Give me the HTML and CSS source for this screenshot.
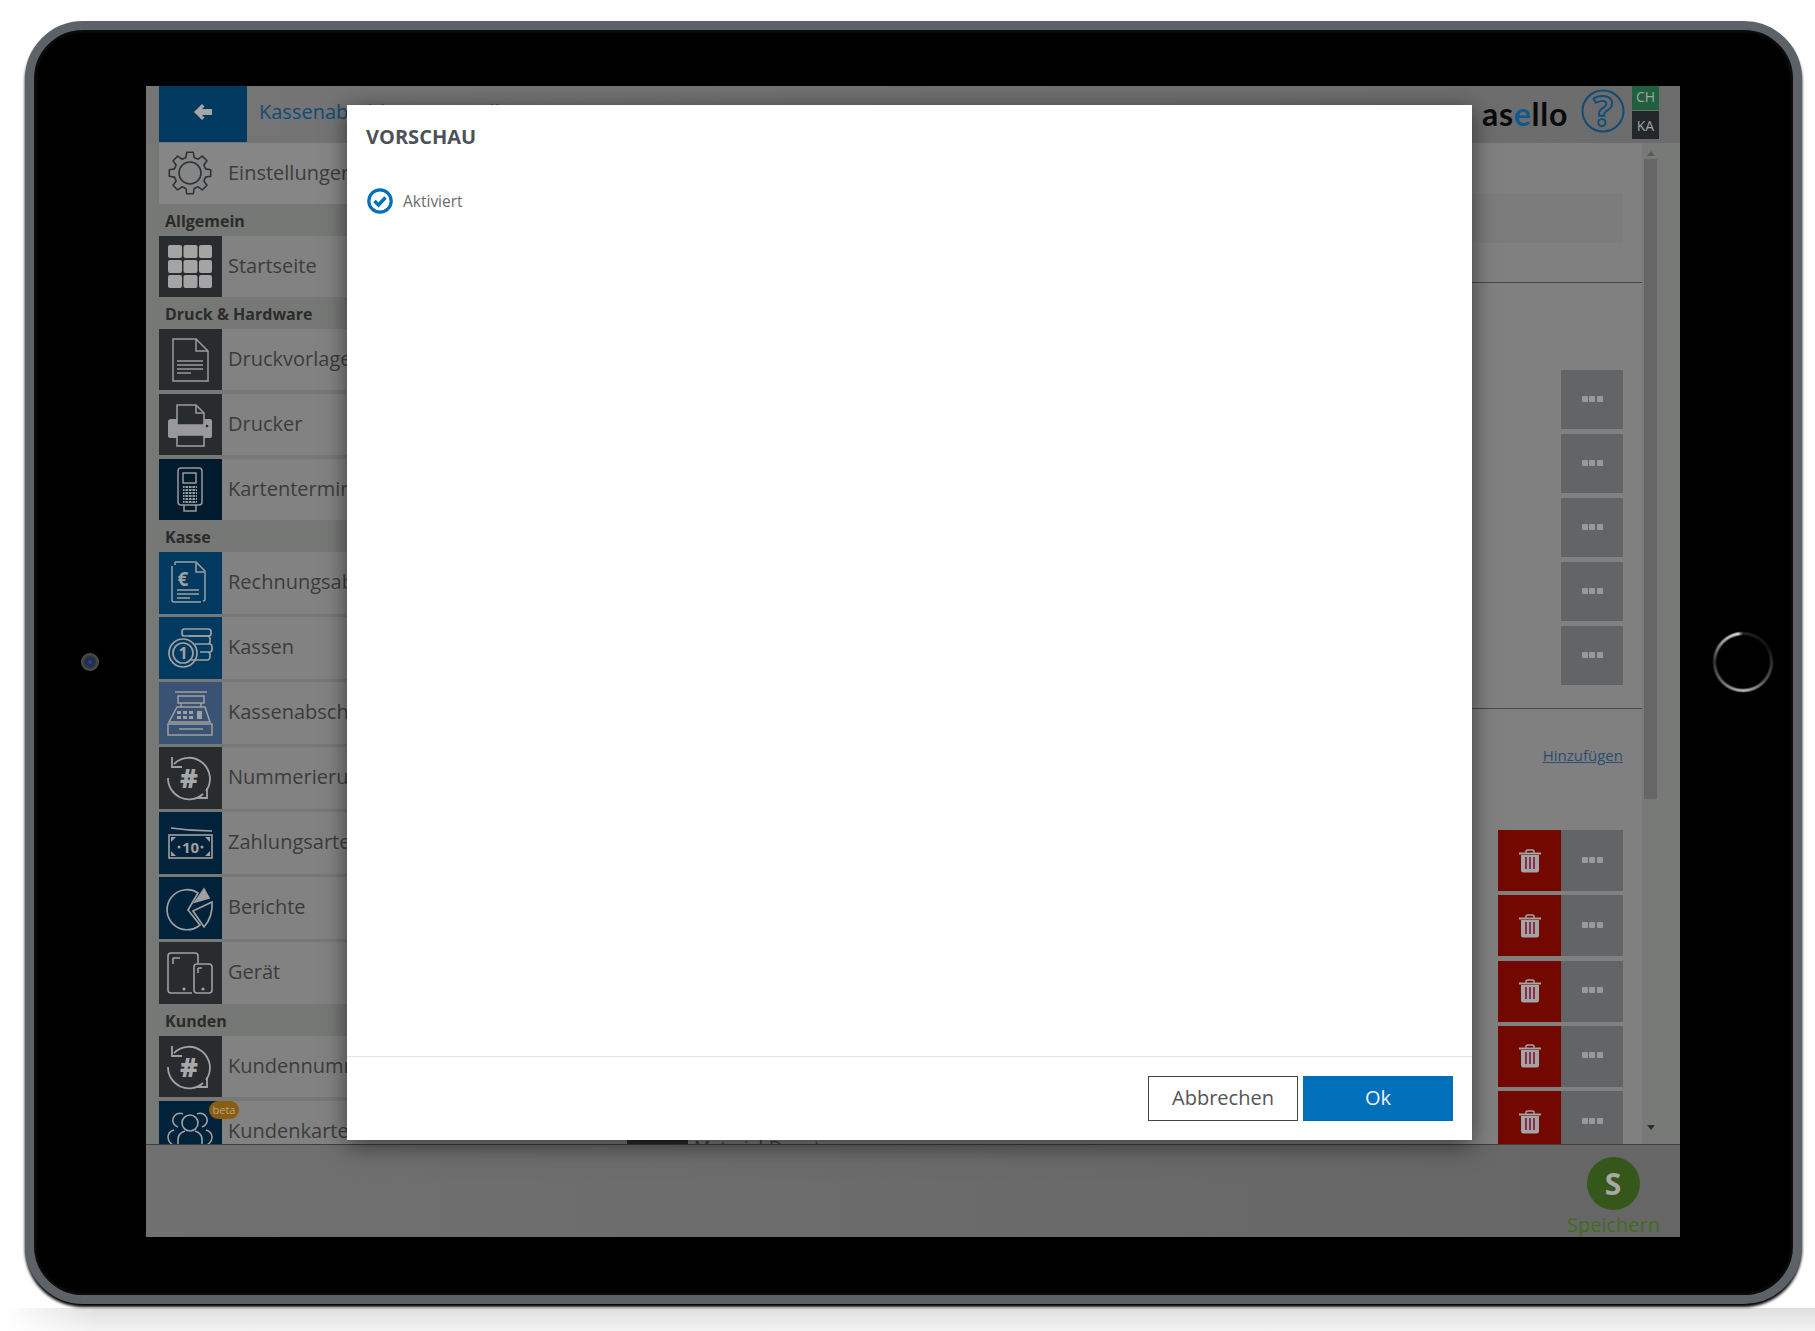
FILE: index.html
```html
<!DOCTYPE html>
<html lang="de">
<head>
  <meta charset="UTF-8">
  <title>asello - Kassenabschluss Einstellungen</title>
  <link rel="stylesheet" href="styles.css">
</head>
<body>

  <div class="tablet">
    <div class="camera"></div>
    <div class="home-btn"></div>

    <div class="screen">
      <div class="topbar">
        <a class="back" href="#">
          <svg width="18" height="16" viewBox="0 0 18 16"><path d="M8 0 0 8l8 8 2.500-2.500L8 11h10V5H8l2.500-2.500z" fill="#a6a6a6"/></svg>
        </a>
        <div class="page-title">Kassenabschluss - Einstellungen</div>
        <div class="logo">as<span>e</span>llo</div>
        <svg class="help" width="44" height="44" viewBox="0 0 44 44">
          <circle cx="22" cy="22" r="20.500" fill="none" stroke="#0e4c7a" stroke-width="2"/>
          <text x="22" y="37" text-anchor="middle" class="help-mark">?</text>
        </svg>
        <div class="badges">
          <div class="badge green">CH</div>
          <div class="badge dark">KA</div>
        </div>
      </div>

      <div class="main">
        <div class="sidebar">
          <div class="row settings">
            <div class="ico">
              <svg viewBox="0 0 63 61"><g transform="translate(31 30)" fill="none" stroke="#2f3336" stroke-width="1.600" stroke-linejoin="round"><path d="M-4.100-15.500-3.300-20.700 3.300-20.700 4.100-15.500 8.060-13.860 12.300-16.970 16.970-12.300 13.860-8.060 15.500-4.100 20.700-3.300 20.700 3.300 15.500 4.100 13.860 8.060 16.970 12.300 12.300 16.970 8.060 13.860 4.100 15.500 3.300 20.700-3.300 20.700-4.100 15.500-8.060 13.860-12.300 16.970-16.970 12.300-13.860 8.060-15.500 4.100-20.700 3.300-20.700-3.300-15.500-4.100-13.860-8.060-16.970-12.300-12.300-16.970-8.060-13.860z"/><circle r="11"/></g></svg>
            </div>
            <span>Einstellungen</span>
          </div>

          <div class="group">Allgemein</div>
          <div class="section">
            <div class="row">
              <div class="ico dark">
                <svg viewBox="0 0 63 61" fill="#a4a4a4"><rect x="9" y="9" width="14" height="13" rx="2"/><rect x="24.500" y="9" width="14" height="13" rx="2"/><rect x="40" y="9" width="13" height="13" rx="2"/><rect x="9" y="24" width="14" height="13" rx="2"/><rect x="24.500" y="24" width="14" height="13" rx="2"/><rect x="40" y="24" width="13" height="13" rx="2"/><rect x="9" y="39" width="14" height="13" rx="2"/><rect x="24.500" y="39" width="14" height="13" rx="2"/><rect x="40" y="39" width="13" height="13" rx="2"/></svg>
              </div>
              <span>Startseite</span>
            </div>
          </div>

          <div class="group">Druck &amp; Hardware</div>
          <div class="section">
            <div class="row">
              <div class="ico dark">
                <svg viewBox="0 0 63 61" fill="none" stroke="#999" stroke-width="1.500"><path d="M14 10h23l12 12v30H14zM37 10v12h12"/><path d="M18 32h26M18 36h26M18 40h26M18 44h14" stroke-width="1.700"/></svg>
              </div>
              <span>Druckvorlagen</span>
            </div>
            <div class="row">
              <div class="ico dark">
                <svg viewBox="0 0 63 61"><path d="M12 25h39q2 0 2 2v15q0 2-2 2H12q-3 0-3-2V28q0-3 3-3z" fill="#999"/><path d="M18 31V11h19l8 8v12z" fill="#282c2f" stroke="#999" stroke-width="1.600"/><path d="M37 11v8h8" fill="none" stroke="#999" stroke-width="1.600"/><rect x="18" y="41" width="27" height="11" fill="#282c2f" stroke="#999" stroke-width="1.600"/><circle cx="48" cy="32" r="1.300" fill="#282c2f"/></svg>
              </div>
              <span>Drucker</span>
            </div>
            <div class="row">
              <div class="ico midnight">
                <svg viewBox="0 0 63 61" fill="none" stroke="#999" stroke-width="1.500"><rect x="19" y="9" width="24" height="37" rx="3"/><rect x="24" y="14" width="13" height="10"/><path d="M25 46v6h12v-6"/><path d="M24 28h14M24 31h14M24 34h14M24 37h14M24 40h14M24 43h14" stroke-width="1.800"/><path d="M26 27v17M29.500 27v17M33 27v17M36.500 27v17" stroke="#001a2e" stroke-width=".8"/></svg>
              </div>
              <span>Kartenterminal</span>
            </div>
          </div>

          <div class="group">Kasse</div>
          <div class="section kasse">
            <div class="row">
              <div class="ico navy">
                <svg viewBox="0 0 63 61" fill="none" stroke="#a0a0a0" stroke-width="1.500"><path d="M16 10h21l9 9v28q0 2-2 2M13 14v34q0 2 2 2h27"/><path d="M16 10v3"/><text x="24" y="34" class="ico-euro">€</text><path d="M37 11v9h8M18 38h22M18 42h22M18 46h13"/></svg>
              </div>
              <span>Rechnungsabschluss</span>
            </div>
            <div class="row">
              <div class="ico navy">
                <svg viewBox="0 0 63 61" fill="none" stroke="#a0a0a0" stroke-width="1.700"><rect x="23" y="12" width="29" height="7" rx="2.500"/><path d="M30 19h19q2 .5 2 3v2q0 3-2 3H36M40 27h11q2 .5 2 3v2q0 3-2 3H41M41 35h8q2 .5 2 3v2q0 2-2 3H32"/><circle cx="24" cy="36" r="14"/><circle cx="24" cy="36" r="10"/><text x="24" y="42" text-anchor="middle" class="ico-one">1</text></svg>
              </div>
              <span>Kassen</span>
            </div>
            <div class="row">
              <div class="ico slate">
                <svg viewBox="0 0 63 61" fill="none" stroke="#a0a0a0" stroke-width="1.500"><path d="M16 10h32M19 14h26v7H19zM22 21v4M42 21v4"/><path d="M18 25h28l5 15H10z"/><rect x="9" y="42" width="44" height="11"/><path d="M20 47h24"/><g fill="#a0a0a0" stroke="none"><rect x="18" y="29" width="4" height="3"/><rect x="24" y="29" width="4" height="3"/><rect x="30" y="29" width="4" height="3"/><rect x="18" y="34" width="4" height="3"/><rect x="24" y="34" width="4" height="3"/><rect x="30" y="34" width="4" height="3"/><rect x="38" y="29" width="5" height="8"/></g></svg>
              </div>
              <span>Kassenabschluss</span>
            </div>
            <div class="row">
              <div class="ico dark">
                <svg viewBox="0 0 63 61" fill="none" stroke="#a0a0a0" stroke-width="1.800"><path d="M15 17A21 21 0 0 1 47 44"/><path d="M13 10v10h10"/><path d="M9 31A21 21 0 0 0 44 47"/><path d="M48 41v10H38"/><text x="30" y="41" text-anchor="middle" class="ico-hash">#</text></svg>
              </div>
              <span>Nummerierung</span>
            </div>
            <div class="row">
              <div class="ico midnight2">
                <svg viewBox="0 0 63 61" fill="none" stroke="#a0a0a0" stroke-width="1.600"><path d="M12 16q20 3 41 3"/><rect x="10" y="23" width="43" height="23"/><text x="31.500" y="41" text-anchor="middle" class="ico-ten">10</text><g fill="#a0a0a0" stroke="none"><circle cx="20" cy="35" r="1.500"/><circle cx="43" cy="35" r="1.500"/><path d="M12 25h5l-5 5zM51 25h-5l5 5zM12 44h5l-5-5zM51 44h-5l5-5z"/></g></svg>
              </div>
              <span>Zahlungsarten</span>
            </div>
            <div class="row">
              <div class="ico midnight2">
                <svg viewBox="0 0 63 61" fill="none" stroke="#a0a0a0" stroke-width="1.700"><path d="M39 16a20 20 0 1 0 2 32L29 33z"/><path d="M36 25l9-13 5 9z" fill="#a0a0a0"/><path d="M34 34l19-9q1 15-8 25z"/></svg>
              </div>
              <span>Berichte</span>
            </div>
            <div class="row">
              <div class="ico dark">
                <svg viewBox="0 0 63 61" fill="none" stroke="#a0a0a0" stroke-width="1.600"><path d="M33 51H12q-3 0-3-3V14q0-3 3-3h24q3 0 3 3v7"/><path d="M14 16v6M14 16h7"/><rect x="35" y="22" width="18" height="29" rx="3"/><path d="M39 26h4M39 26v5"/><circle cx="44" cy="47" r=".8"/><circle cx="25" cy="47" r=".8"/></svg>
              </div>
              <span>Gerät</span>
            </div>
          </div>

          <div class="group">Kunden</div>
          <div class="section">
            <div class="row">
              <div class="ico dark">
                <svg viewBox="0 0 63 61" fill="none" stroke="#a0a0a0" stroke-width="1.800"><path d="M15 17A21 21 0 0 1 47 44"/><path d="M13 10v10h10"/><path d="M9 31A21 21 0 0 0 44 47"/><path d="M48 41v10H38"/><text x="30" y="41" text-anchor="middle" class="ico-hash">#</text></svg>
              </div>
              <span>Kundennummer</span>
            </div>
            <div class="row">
              <div class="ico midnight2">
                <svg viewBox="0 0 63 61" fill="none" stroke="#a0a0a0" stroke-width="1.600"><circle cx="31" cy="22" r="8"/><path d="M24 13a7 7 0 1 0-5 13M38 13a7 7 0 1 1 5 13"/><path d="M19 44v-5q0-7 7-9M43 44v-5q0-7-7-9M14 44q-5-3-5-8 0-5 6-7M48 44q5-3 5-8 0-5-6-7"/></svg>
              </div>
              <span>Kundenkarten</span>
              <div class="beta">beta</div>
            </div>
          </div>
        </div>

        <div class="content">
          <div class="input-bar"></div>
          <div class="sep first"></div>

          <div class="list plain">
            <div class="item"><div class="more"><i></i><i></i><i></i></div></div>
            <div class="item"><div class="more"><i></i><i></i><i></i></div></div>
            <div class="item"><div class="more"><i></i><i></i><i></i></div></div>
            <div class="item"><div class="more"><i></i><i></i><i></i></div></div>
            <div class="item"><div class="more"><i></i><i></i><i></i></div></div>
          </div>
          <div class="sep second"></div>

          <div class="add-line"><a href="#">Hinzufügen</a></div>

          <div class="list">
            <div class="item"><div class="del"><svg width="22" height="24" viewBox="0 0 22 24"><use href="#trash"/></svg></div><div class="more"><i></i><i></i><i></i></div></div>
            <div class="item"><div class="del"><svg width="22" height="24" viewBox="0 0 22 24"><use href="#trash"/></svg></div><div class="more"><i></i><i></i><i></i></div></div>
            <div class="item"><div class="del"><svg width="22" height="24" viewBox="0 0 22 24"><use href="#trash"/></svg></div><div class="more"><i></i><i></i><i></i></div></div>
            <div class="item"><div class="del"><svg width="22" height="24" viewBox="0 0 22 24"><use href="#trash"/></svg></div><div class="more"><i></i><i></i><i></i></div></div>
            <div class="item">
              <div class="peek"><div class="thumb"></div><span>Material-Depot</span></div>
              <div class="del"><svg width="22" height="24" viewBox="0 0 22 24"><use href="#trash"/></svg></div><div class="more"><i></i><i></i><i></i></div>
            </div>
          </div>
        </div>

        <div class="scrollbar">
          <div class="arrow up"></div>
          <div class="thumb-bar"></div>
          <div class="arrow down"></div>
        </div>
      </div>

      <div class="bottombar">
        <a class="save" href="#">
          <div class="save-circle">S</div>
          <div class="save-label">Speichern</div>
        </a>
      </div>

      <!-- Vorschau dialog -->
      <div class="modal">
        <div class="modal-body">
          <h3>VORSCHAU</h3>
          <div class="check-line">
            <svg width="26" height="26" viewBox="0 0 26 26" fill="none" stroke="#0070ba"><circle cx="13" cy="13" r="11.200" stroke-width="3.200"/><path d="M7.500 13l4 4 7-7.500" stroke-width="3.400"/></svg>
            <span>Aktiviert</span>
          </div>
        </div>
        <div class="modal-foot">
          <button class="btn cancel">Abbrechen</button>
          <button class="btn ok">Ok</button>
        </div>
      </div>
    </div>
  </div>
  <div class="floor"></div>

  <svg width="0" height="0" class="defs">
    <symbol id="trash" viewBox="0 0 22 24">
      <path d="M7 4V2.500Q7 1 9 1h4q2 0 2 1.500V4" fill="none" stroke="#a4a4a4" stroke-width="1.500"/>
      <rect x="0" y="3.500" width="22" height="2" fill="#a4a4a4"/>
      <path d="M2 6h18v15q0 2.500-2.500 2.500h-13Q2 23.500 2 21z" fill="#a4a4a4"/>
      <path d="M7 8v12M11 8v12M15 8v12" stroke="#7c0a30" stroke-width="1.500"/>
    </symbol>
  </svg>

</body>
</html>
```

FILE: styles.css
```css
* {
  box-sizing: border-box;
}

html, body {
  margin: 0;
  height: 1331px;
  overflow: hidden;
}

body {
  background: #fff;
  font-family: "Open Sans", Arial, sans-serif;
  padding: 21px 13px 0 25px;
}

a {
  color: inherit;
}

.defs {
  position: absolute;
}

/* device frame */
.tablet {
  position: relative;
  height: 1283px;
  padding: 56px 0 0 112px;
  background: #000;
  border: 9px solid #5c6268;
  border-radius: 58px;
  box-shadow: inset 0 0 3px 2px #111, 0 3px 3px #000;
}

.floor {
  height: 27px;
  margin: 4px -13px 0 -20px;
  background: linear-gradient(90deg, #fff, rgba(255, 255, 255, 0) 90px), linear-gradient(#dfdfdf, #f6f6f6);
}

.camera {
  position: absolute;
  left: 47px;
  top: 623px;
  width: 18px;
  height: 18px;
  border-radius: 50%;
  background: radial-gradient(circle, #2a4fa0 0, #142a60 25%, #333 42%, #555 72%, #222 100%);
}

.home-btn {
  position: absolute;
  left: 1678px;
  top: 601px;
  width: 62px;
  height: 62px;
  border-radius: 50%;
  background: conic-gradient(#222 0deg, #111 60deg, #555 130deg, #bbb 180deg, #666 230deg, #333 270deg, #aaa 320deg, #ddd 350deg, #222 360deg);
  -webkit-mask: radial-gradient(circle, transparent 26px, #000 28px, #000 29px, transparent 31px);
  mask: radial-gradient(circle, transparent 26px, #000 28px, #000 29px, transparent 31px);
}

.screen {
  position: relative;
  width: 1534px;
  height: 1151px;
  display: flex;
  flex-direction: column;
  background: #757875;
  overflow: hidden;
}

/* top bar */
.topbar {
  height: 57px;
  flex: none;
  display: flex;
  align-items: flex-start;
  padding-left: 13px;
  background: linear-gradient(90deg, #757575, #6c6c6c);
}

.back {
  width: 88px;
  height: 56px;
  padding-bottom: 4px;
  display: flex;
  align-items: center;
  justify-content: center;
  background: #003a60;
}

.page-title {
  margin: 12px 0 0 12px;
  font-size: 20px;
  color: #0e4c7a;
  flex: 1;
}

.logo {
  margin: 6px 0 0;
  font-family: Lato, "Open Sans", sans-serif;
  font-weight: 700;
  font-size: 32px;
  letter-spacing: 0.7px;
  color: #0a0a0a;
  line-height: 44px;
}

.logo span {
  color: #0e5a8c;
}

.help {
  margin: 3px 7px 0 13px;
  overflow: visible;
}

.help-mark {
  font-size: 41px;
  font-weight: 700;
  fill: none;
  stroke: #0e4c7a;
  stroke-width: 1.800;
}

.badges {
  width: 27px;
  margin-right: 21px;
}

.badge {
  height: 24px;
  text-align: center;
  font-size: 14px;
  line-height: 22px;
  color: #a0a5a2;
}

.badge.green {
  background: #206040;
  margin-bottom: 1px;
}

.badge.dark {
  height: 28px;
  line-height: 30px;
  background: #22272a;
}

/* main area */
.main {
  flex: none;
  height: 1001px;
  display: flex;
}

.sidebar {
  width: 253px;
  flex: none;
  padding-left: 13px;
  overflow: hidden;
}

.section {
  display: flex;
  flex-direction: column;
  gap: 4px;
}

.section.kasse {
  gap: 3px;
}

.row {
  position: relative;
  height: 61px;
  flex: none;
  display: flex;
  align-items: center;
  background: #828282;
  font-size: 20px;
  color: #3c3c3c;
  white-space: nowrap;
}

.kasse .row {
  height: 62px;
}

.row span {
  margin: 0 0 2px 6px;
}

.kasse .row span {
  margin-bottom: 3px;
}

.row.settings {
  background: #868686;
}

.ico {
  width: 63px;
  height: 100%;
  flex: none;
}

.ico svg {
  display: block;
  width: 63px;
  height: 61px;
}

.ico.dark { background: #282c2f; }
.ico.navy { background: #003a60; }
.ico.slate { background: #3a5273; }
.ico.midnight { background: #001a2e; }
.ico.midnight2 { background: #00233b; }

.ico-euro { font-size: 19px; font-weight: 700; fill: #a0a0a0; stroke: none; text-anchor: middle; }
.ico-one { font-size: 16px; font-weight: 700; fill: #a0a0a0; stroke: none; }
.ico-hash { font-size: 27px; font-weight: 800; fill: #a8a8a8; stroke: none; }
.ico-ten { font-size: 15px; font-weight: 700; fill: #a0a0a0; stroke: none; }

.group {
  height: 32px;
  padding: 5px 0 0 6px;
  font-size: 16px;
  line-height: 24px;
  font-weight: 700;
  color: #2b2b2b;
  white-space: nowrap;
}

.beta {
  position: absolute;
  left: 50px;
  top: 0;
  width: 30px;
  height: 18px;
  border-radius: 9px;
  background: #8a5c10;
  text-align: center;
  font-size: 11px;
  line-height: 17px;
  color: #b5a488;
}

/* content behind the dialog */
.content {
  flex: 1;
  min-width: 0;
  padding: 51px 19px 0 0;
  background: #808080;
  overflow: hidden;
}

.input-bar {
  height: 49px;
  background: #7c7c7c;
}

.sep {
  height: 1px;
  margin-right: -19px;
  background: #44484c;
}

.sep.first {
  margin-top: 39px;
  margin-bottom: 87px;
}

.sep.second {
  margin-top: 23px;
}

.list {
  display: flex;
  flex-direction: column;
  gap: 4.250px;
}

.list.plain {
  gap: 5px;
}

.item {
  height: 61px;
  display: flex;
  justify-content: flex-end;
}

.plain .item {
  height: 59px;
}

.del {
  width: 63px;
  display: flex;
  align-items: center;
  justify-content: center;
  background: #720800;
}

.more {
  width: 62px;
  display: flex;
  align-items: center;
  justify-content: center;
  gap: 1.500px;
  padding-bottom: 2px;
  background: #636465;
}

.more i {
  width: 6px;
  height: 6px;
  border-radius: 1px;
  background: #999;
}

.add-line {
  height: 121px;
  padding-top: 35px;
  text-align: right;
  font-size: 15px;
  line-height: 22px;
  color: #2b4d70;
}

.peek {
  flex: none;
  display: flex;
  align-items: flex-start;
  gap: 6px;
  height: 70px;
  margin: 0 auto 0 228px;
  padding-top: 49px;
  font-size: 18px;
  line-height: 20px;
  color: #3c3c3c;
  white-space: nowrap;
}

.peek .thumb {
  width: 61px;
  height: 20px;
  background: #282c2f;
}

.peek span {
  margin-top: -3px;
}

.scrollbar {
  width: 38px;
  flex: none;
  padding: 8px 0 0 2px;
  background: #787a78;
}

.thumb-bar {
  width: 13px;
  height: 640px;
  margin-top: 3px;
  background: #666;
}

.arrow {
  width: 0;
  height: 0;
  margin-left: 2.500px;
  border-left: 4px solid transparent;
  border-right: 4px solid transparent;
}

.arrow.up {
  border-bottom: 5px solid #5a5a5a;
}

.arrow.down {
  margin-top: 326px;
  border-top: 5px solid #2c2c2c;
}

/* bottom bar */
.bottombar {
  flex: 1;
  display: flex;
  justify-content: flex-end;
  border-top: 1px solid #3f3f3f;
  background: linear-gradient(90deg, #707070, #666);
  padding-right: 21px;
}

.save {
  display: block;
  text-decoration: none;
  width: 92px;
  padding-top: 12px;
  text-align: center;
}

.save-circle {
  width: 53px;
  height: 53px;
  margin: 0 auto;
  border-radius: 50%;
  background: #35581a;
  color: #a8a8a8;
  font-size: 30px;
  font-weight: 700;
  line-height: 53px;
}

.save-label {
  font-size: 20px;
  line-height: 28px;
  color: #426b1f;
  margin-top: 1px;
}

/* dialog */
.modal {
  position: absolute;
  left: 201px;
  top: 19px;
  width: 1125px;
  height: 1035px;
  display: flex;
  flex-direction: column;
  background: #fff;
  box-shadow: 0 5px 22px rgba(0, 0, 0, 0.55);
}

.modal-body {
  flex: 1;
  padding: 18px 19px;
}

.modal-body h3 {
  margin: 0;
  font-size: 20px;
  line-height: 27px;
  font-weight: 700;
  color: #4d5258;
}

.check-line {
  display: flex;
  align-items: center;
  gap: 10px;
  margin: 38px 0 0 1px;
  font-size: 15.500px;
  color: #6b6b6b;
}

.modal-foot {
  height: 84px;
  flex: none;
  display: flex;
  justify-content: flex-end;
  gap: 5px;
  padding: 19px 19px 0 0;
  border-top: 1px solid #e3e3e3;
}

.btn {
  width: 150px;
  height: 45px;
  padding: 0 0 2px;
  font-family: "Open Sans", Arial, sans-serif;
  font-size: 20px;
  border: 1px solid #444;
  background: #fff;
  color: #555;
}

.btn.ok {
  background: #0070ba;
  border-color: #0070ba;
  color: #eef5fa;
}
```
